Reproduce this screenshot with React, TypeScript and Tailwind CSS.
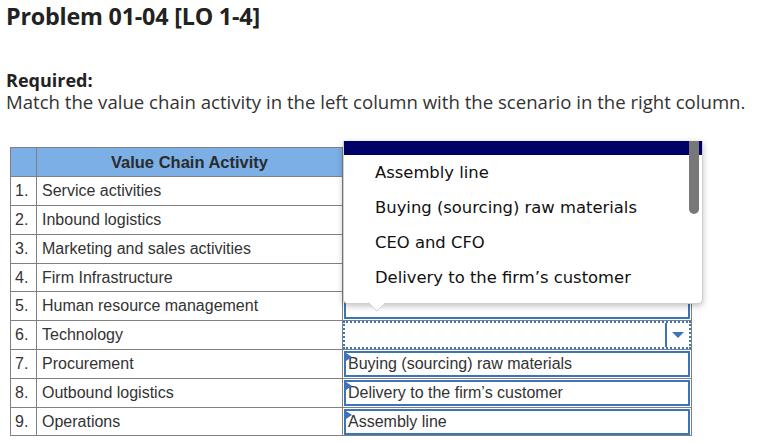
import React from "react";

const rows = [
  "Service activities",
  "Inbound logistics",
  "Marketing and sales activities",
  "Firm Infrastructure",
  "Human resource management",
  "Technology",
  "Procurement",
  "Outbound logistics",
  "Operations",
];
const heights = [29, 29, 29, 28, 29, 29, 29, 29, 28];
const answers: Record<number, string> = {
  6: "Buying (sourcing) raw materials",
  7: "Delivery to the firm\u2019s customer",
  8: "Assembly line",
};

function AnswerBox({ text, marker }: { text: string; marker: boolean }) {
  return (
    <div className="relative mx-[1px] h-[26px] border-2 border-[#3d74b9] bg-white pl-[2px] leading-[22px] text-[#333]">
      {marker && (
        <span className="absolute left-0 top-0 h-0 w-0 border-y-[4px] border-l-[6px] border-y-transparent border-l-[#3d74b9]" />
      )}
      {text}
    </div>
  );
}

function FocusSelect() {
  return (
    <div className="flex h-[28px] border-2 border-dotted border-[#3d74b9] bg-white">
      <div className="flex-1" />
      <div className="flex w-[24px] items-center justify-center border-l-2 border-[#3d74b9]">
        <span className="h-0 w-0 border-x-[6px] border-t-[6px] border-x-transparent border-t-[#3d74b9]" />
      </div>
    </div>
  );
}

export default function App() {
  return (
    <div className="relative h-[443px] w-[763px] overflow-hidden bg-white text-[#2b2b2b]">
      <div className="pl-[6px] pt-[2px]" style={{ fontFamily: "'Open Sans', Lato, sans-serif" }}>
        <h1 className="text-[23.3px] font-bold leading-[28px] tracking-[-0.2px] text-[#222]">Problem 01-04 [LO 1-4]</h1>
        <div className="mt-[39px] text-[18px] font-bold leading-[22px] text-[#222]">Required:</div>
        <div className="text-[18.6px] leading-[22px] text-[#333]">
          Match the value chain activity in the left column with the scenario in the right column.
        </div>
      </div>

      <table
        className="absolute left-[10px] top-[147px] border-collapse text-[16px] text-[#333]"
        style={{ fontFamily: "'Liberation Sans', Arial, sans-serif" }}
      >
        <tbody>
          <tr className="h-[29px]">
            <td className="w-[26px] border border-[#808080] bg-[#7cafe6] p-0"></td>
            <td className="w-[306px] border border-[#808080] bg-[#7cafe6] p-0 text-center text-[16.5px] font-bold text-[#2b2b2b]">
              Value Chain Activity
            </td>
            <td className="w-[349px] border border-[#808080] p-0"></td>
          </tr>
          {rows.map((r, i) => (
            <tr key={i} style={{ height: heights[i] }}>
              <td className="border border-[#808080] p-0 pl-[4px] align-middle">{i + 1}.</td>
              <td className="border border-[#808080] p-0 pl-[5px] align-middle">{r}</td>
              <td className="border border-[#808080] p-0 align-middle">
                {i === 5 ? (
                  <FocusSelect />
                ) : (
                  <AnswerBox text={answers[i] ?? ""} marker={i >= 6} />
                )}
              </td>
            </tr>
          ))}
        </tbody>
      </table>

      {/* Dropdown popup */}
      <div
        className="absolute left-[343px] top-[141px] h-[163px] w-[360px] rounded-b-[5px] border border-t-0 border-[#d0d0d0] bg-white shadow-[0_2px_6px_rgba(0,0,0,0.25)]"
        style={{ fontFamily: "'DejaVu Sans', Verdana, sans-serif" }}
      >
        <div className="h-[14px] bg-[#000066]" />
        <div className="text-[16.4px] text-[#111]">
          {["Assembly line", "Buying (sourcing) raw materials", "CEO and CFO", "Delivery to the firm\u2019s customer"].map(
            (t) => (
              <div key={t} className="h-[35px] pl-[31px] leading-[35px]">
                {t}
              </div>
            )
          )}
        </div>
        <div className="absolute right-[3px] top-0 h-[73px] w-[10px] rounded-b-full bg-[#787878]" />
        <svg className="absolute left-[24px] top-[161px]" width="18" height="10" viewBox="0 0 18 10">
          <path d="M0 0 L9 9 L18 0 Z" fill="white" />
          <path d="M0 0.5 L9 9 L18 0.5" fill="none" stroke="#d0d0d0" strokeWidth="1" />
        </svg>
      </div>
    </div>
  );
}
